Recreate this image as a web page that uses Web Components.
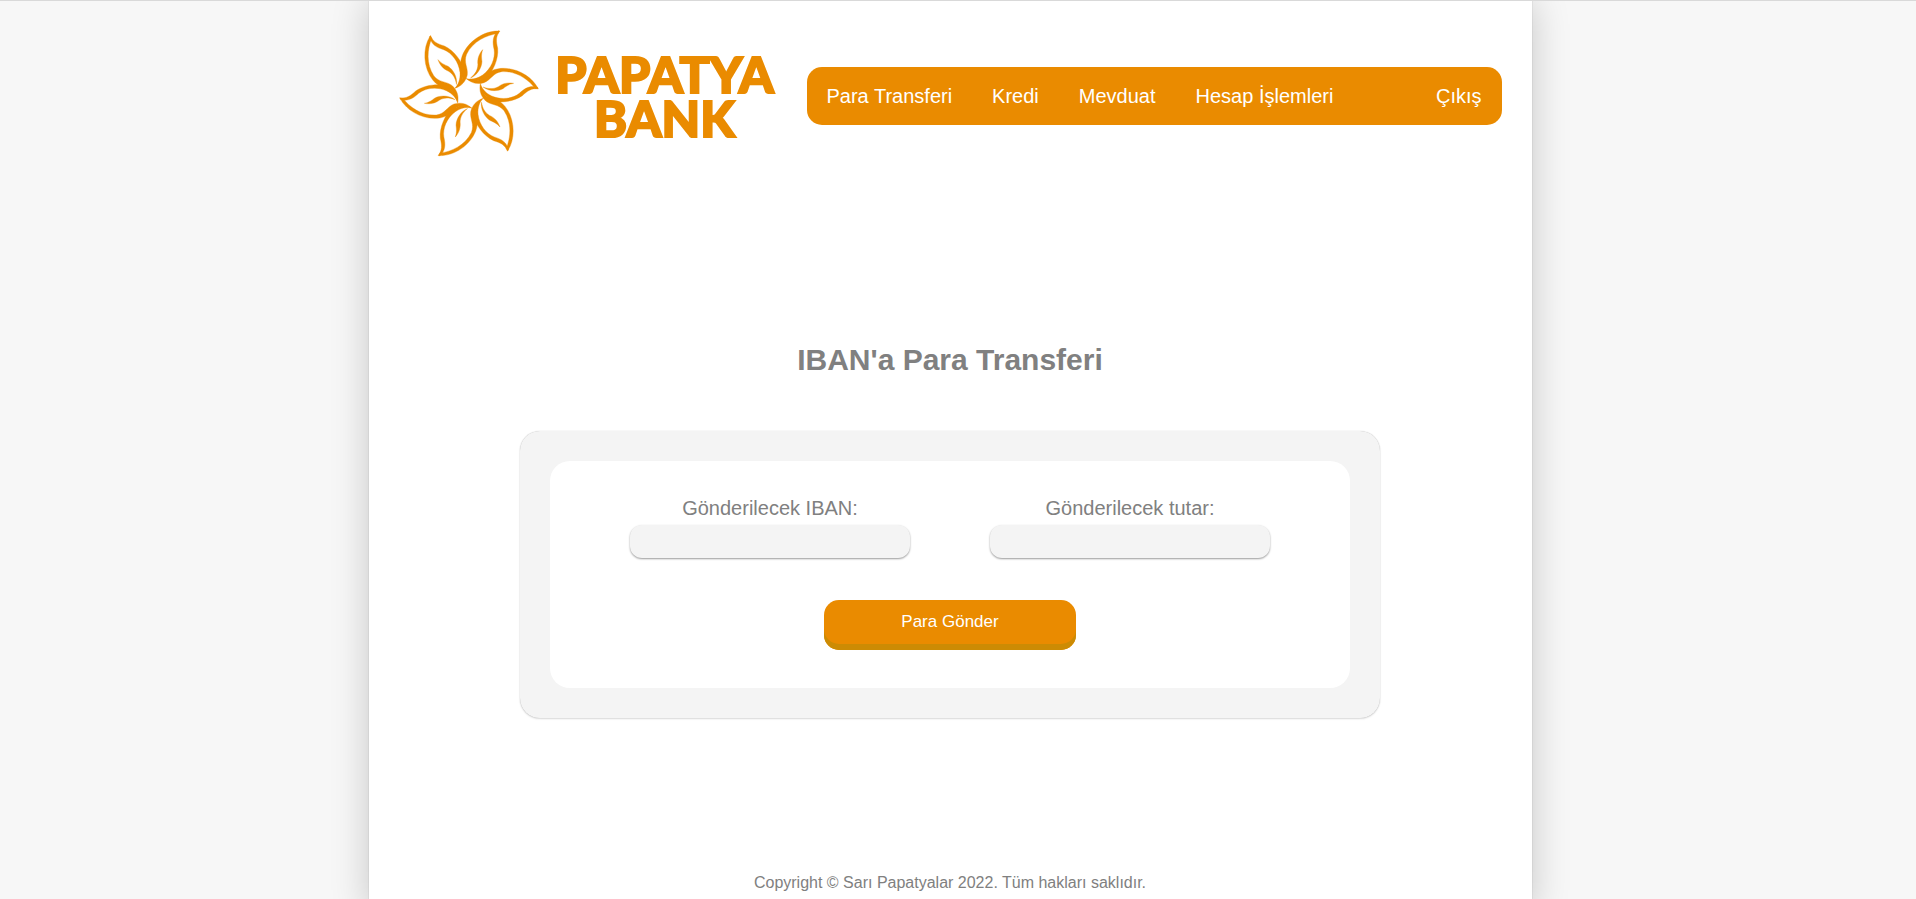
<!DOCTYPE html>
<html lang="tr">
<head>
<meta charset="utf-8">
<meta name="viewport" content="width=device-width, initial-scale=1">
<title>Papatya Bank - Para Transferi</title>
<style>
  html { height: 100%; }
  body {
    box-sizing: border-box;
    min-height: 100%;
    margin: 0;
    padding-right: 16px;
    display: flex;
    justify-content: center;
    overflow: hidden;
    border-top: 1px solid #d9d9d9;
    background: #f7f7f7;
    color: #808080;
    font-family: "Liberation Sans", Arial, sans-serif;
    font-size: 20px;
    --orange: #ea8b00;
    --orange-dark: #cc8b04;
    --soft: #f4f4f4;
  }
</style>
</head>
<body>
<bank-page>
  <bank-header slot="header">
    <bank-logo slot="logo"></bank-logo>
    <bank-nav slot="nav">
      <nav-link href="#transfer">Para Transferi</nav-link>
      <nav-link href="#kredi">Kredi</nav-link>
      <nav-link href="#mevduat">Mevduat</nav-link>
      <nav-link href="#hesap">Hesap İşlemleri</nav-link>
      <nav-link href="#cikis" slot="end">Çıkış</nav-link>
    </bank-nav>
  </bank-header>
  <transfer-panel heading="IBAN'a Para Transferi">
    <text-field name="iban" label="Gönderilecek IBAN:"></text-field>
    <text-field name="tutar" label="Gönderilecek tutar:"></text-field>
    <submit-button slot="action">Para Gönder</submit-button>
  </transfer-panel>
  <span slot="footer">Copyright © Sarı Papatyalar 2022. Tüm hakları saklıdır.</span>
</bank-page>

<script>
  const define = (name, render) => customElements.define(name, class extends HTMLElement {
    constructor() {
      super();
      this.attachShadow({ mode: 'open' });
    }
    connectedCallback() {
      this.shadowRoot.innerHTML = render(this);
    }
  });

  define('bank-page', () => `
    <style>
      :host {
        display: flex; flex-direction: column; box-sizing: border-box;
        width: 100%; max-width: 1163px;
        background: #fff; box-shadow: 0 0 1px #0004, 0 0 36px #0003;
      }
      main { padding: 180px 0 155px; }
      footer { padding-bottom: 20px; font-size: 16px; line-height: 20px; text-align: center; }
    </style>
    <slot name="header"></slot>
    <main><slot></slot></main>
    <footer><slot name="footer"></slot></footer>`);

  define('bank-header', () => `
    <style>
      :host { display: block; }
      header { display: flex; align-items: center; gap: 30px; padding: 29px 30px 0; }
      ::slotted(bank-nav) { flex: 1; }
    </style>
    <header><slot name="logo"></slot><slot name="nav"></slot></header>`);

  const petals = [0, 60, 120, 180, 240, 300]
    .map(a => `<use href="#petal" transform="rotate(${a} 237 220)"/>`).join('');

  define('bank-logo', () => `
    <style>
      :host { display: block; }
      a { display: flex; align-items: center; gap: 14px; color: var(--orange); text-decoration: none; }
      svg { display: block; width: 140px; height: 132px; fill: currentColor; }
      .name {
        width: 224px; text-align: center;
        font: 900 50px/44px Lato, sans-serif;
        -webkit-text-stroke: 2px currentColor;
      }
    </style>
    <a href="#home">
      <svg viewBox="27 30 420 396" aria-hidden="true">
        <defs>
          <g id="petal" stroke="currentColor" stroke-width="1">
            <path d="M232 178C250 183 264 183 273 178C292 166 292 152 325 146C372 139 424 166 444 205L436 206C415 178 378 152 335 155C308 159 304 179 282 188C262 194 244 189 232 178Z"/>
            <path d="M445 207C425 203 412 213 397 227C370 246 330 250 296 242L293 232C278 222 269 210 271 190C275 205 286 219 305 228C335 241 368 236 388 220C405 204 421 195 443 202Z"/>
            <path d="M279 201C298 208 312 207 325 200C340 189 355 187 371 190C355 193 349 199 339 206C322 215 295 214 279 201Z"/>
          </g>
        </defs>
        ${petals}
      </svg>
      <span class="name">PAPATYA BANK</span>
    </a>`);

  define('bank-nav', () => `
    <style>
      :host { display: block; }
      nav {
        display: flex; justify-content: space-between; padding: 17px 20px;
        border-radius: 15px; background: var(--orange); color: #fff;
      }
      div { display: flex; gap: 40px; }
    </style>
    <nav><div><slot></slot></div><slot name="end"></slot></nav>`);

  define('nav-link', el => `
    <style>
      :host { display: block; }
      a { display: block; color: inherit; line-height: 24px; text-decoration: none; white-space: nowrap; }
    </style>
    <a href="${el.getAttribute('href')}"><slot></slot></a>`);

  define('transfer-panel', el => `
    <style>
      :host { display: flex; flex-direction: column; align-items: center; }
      h1 { margin: 0 0 53px; font-size: 30px; line-height: 36px; text-align: center; }
      section {
        box-sizing: border-box; width: 100%; max-width: 860px; padding: 30px;
        border-radius: 20px; background: var(--soft);
        box-shadow: 0 0 1px #0004, 0 1px 2px #0002;
      }
      form {
        display: flex; flex-direction: column; align-items: center; gap: 42px;
        padding: 35px 80px 38px; border-radius: 20px; background: #fff;
      }
      .fields { display: flex; align-self: stretch; gap: 80px; }
      ::slotted(text-field) { flex: 1; }
    </style>
    <h1>${el.getAttribute('heading')}</h1>
    <section>
      <form>
        <div class="fields"><slot></slot></div>
        <slot name="action"></slot>
      </form>
    </section>`);

  define('text-field', el => `
    <style>
      :host { display: block; }
      label { display: block; margin-bottom: 5px; line-height: 24px; text-align: center; }
      input {
        display: block; box-sizing: border-box; width: 100%; height: 33px; padding: 0 12px;
        border: 0; border-radius: 12px; outline: 0; background: var(--soft);
        color: inherit; font: inherit; font-size: 16px;
        box-shadow: 0 1px 2px #0006;
      }
    </style>
    <label for="field">${el.getAttribute('label')}</label>
    <input id="field" type="text" name="${el.getAttribute('name')}">`);

  define('submit-button', () => `
    <style>
      :host { display: block; }
      button {
        display: block; box-sizing: border-box; width: 252px; height: 50px; padding: 0 0 6px;
        border: 0; border-radius: 15px; background: var(--orange); color: #fff;
        box-shadow: inset 0 -6px var(--orange-dark);
        font: inherit; font-size: 17px; cursor: pointer;
      }
    </style>
    <button type="button"><slot></slot></button>`);
</script>
</body>
</html>
